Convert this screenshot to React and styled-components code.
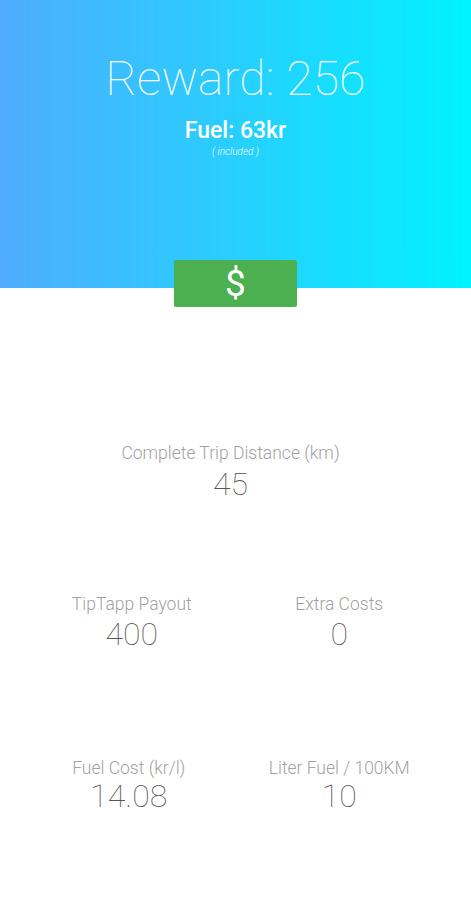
import styled, { createGlobalStyle } from 'styled-components';

const GlobalStyle = createGlobalStyle`
    html, body {
        margin: 0;
        padding: 0;
        background: #ffffff;
        font-family: Roboto, "Liberation Sans", sans-serif;
    }
`;

const Page = styled.div`
    width: 471px;
    min-height: 900px;
    display: flex;
    flex-direction: column;
    align-items: center;
    background: #ffffff;
`;

const Header = styled.header`
    width: 100%;
    height: 288px;
    background: linear-gradient(to right, #4facfe 0%, #00f2fe 100%);
    display: flex;
    flex-direction: column;
    align-items: center;
    color: #ffffff;
    box-sizing: border-box;
    padding-top: 52px;
`;

const Reward = styled.h1`
    margin: 0;
    font-size: 48px;
    line-height: 54px;
    font-weight: 100;
    letter-spacing: 0.2px;
`;

const Fuel = styled.div`
    margin-top: 11px;
    font-size: 23px;
    line-height: 28px;
    font-weight: 500;
`;

const Note = styled.div`
    margin-top: 1px;
    font-size: 10px;
    line-height: 12px;
    font-style: italic;
    font-weight: 300;
    opacity: 0.95;
`;

const PayButton = styled.button`
    margin-top: -28px;
    width: 123px;
    height: 47px;
    border: none;
    border-radius: 2px;
    background: #4caf50;
    color: #ffffff;
    font-family: Roboto, "Liberation Sans", sans-serif;
    font-size: 37px;
    font-weight: 400;
    line-height: 47px;
    padding: 0;
    cursor: pointer;
`;

const Stats = styled.section`
    width: 100%;
    box-sizing: border-box;
    padding: 0 28px;
`;

const Row = styled.div`
    display: grid;
    grid-template-columns: ${p => (p.$single ? '1fr' : '1fr 1fr')};
    margin-top: ${p => p.$gap}px;
`;

const Field = styled.div`
    display: flex;
    flex-direction: column;
    align-items: center;
    transform: translateX(${p => p.$shift || 0}px);
`;

const Label = styled.div`
    font-size: 17.5px;
    line-height: 20px;
    font-weight: 300;
    color: #a2a2a2;
`;

const Value = styled.div`
    margin-top: ${p => p.$gap ?? 2}px;
    font-size: 32px;
    line-height: 36px;
    font-weight: 100;
    color: #555555;
`;

const App = () => {
    return (
        <Page>
            <GlobalStyle/>
            <Header>
                <Reward>Reward: 256</Reward>
                <Fuel>Fuel: 63kr</Fuel>
                <Note>( included )</Note>
            </Header>
            <PayButton>$</PayButton>
            <Stats>
                <Row $single $gap={136}>
                    <Field $shift={-5}>
                        <Label>Complete Trip Distance (km)</Label>
                        <Value $gap={3}>45</Value>
                    </Field>
                </Row>
                <Row $gap={92}>
                    <Field>
                        <Label>TipTapp Payout</Label>
                        <Value>400</Value>
                    </Field>
                    <Field>
                        <Label>Extra Costs</Label>
                        <Value>0</Value>
                    </Field>
                </Row>
                <Row $gap={106}>
                    <Field $shift={-3}>
                        <Label>Fuel Cost (kr/l)</Label>
                        <Value $gap={0}>14.08</Value>
                    </Field>
                    <Field>
                        <Label>Liter Fuel / 100KM</Label>
                        <Value $gap={0}>10</Value>
                    </Field>
                </Row>
            </Stats>
        </Page>
    );
};

export default App;
